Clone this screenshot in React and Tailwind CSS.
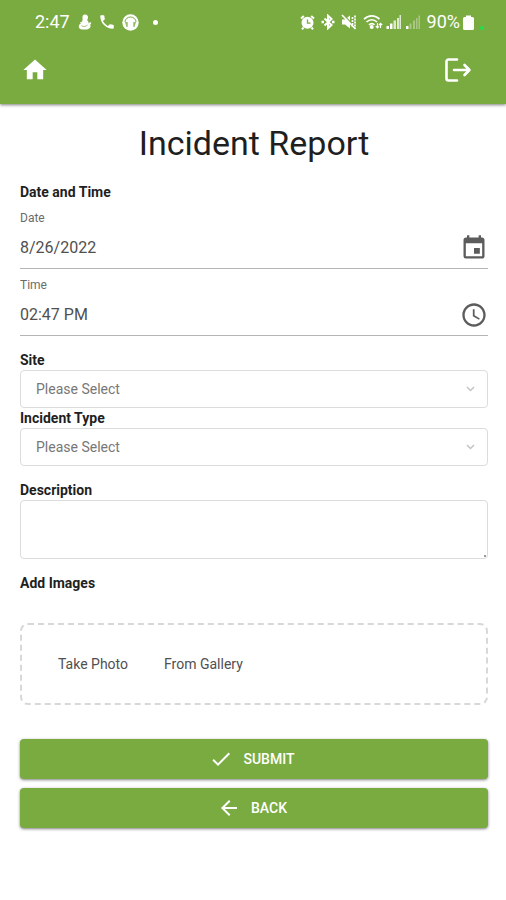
import React, { useState } from "react";
import { MdAccessTime, MdArrowBack, MdCheck, MdEvent, MdHome, MdPhone } from "react-icons/md";

const StatusBar = () => (
  <div className="flex h-9 items-center justify-between pt-2 pr-[22px] pl-[35px] text-lg leading-5">
    <div className="flex items-center gap-[6px]">
      <span className="mr-[2px]">2:47</span>
      <svg className="h-4 w-[14px]" viewBox="0 0 14 16" fill="currentColor">
        <path d="M7 0.5c2 0 3 1.3 3 3 0 1-.4 1.900-1 2.500 1.200.8 1.700 2 1.600 3.400l1.700-1.400 1 1-1 1.500c.9 2.600-.8 5-4.300 5H4.500C2 15.500.5 14 .8 12c.2-1.300 1-2 2-2.300L2 8.500l2.200-.9L4.600 5C4 2.500 5 .5 7 .5z" />
        <path d="M3.500 11.500c1.500 1.500 4 1.500 6-.5" fill="none" stroke="#7aab41" strokeWidth="1" opacity="0.7" />
      </svg>
      <MdPhone className="size-[18px]" />
      <svg className="size-[17px]" viewBox="0 0 17 17">
        <circle cx="8.500" cy="8.500" r="8.200" fill="currentColor" />
        <path d="M3 8a5.500 5 0 0 1 11 0" fill="none" stroke="#7aab41" strokeWidth="1" />
        <path d="M3 8h2.700v5H4.500zM11.300 8H14l-1.500 5h-1.200z" fill="#7aab41" opacity="0.8" />
      </svg>
      <span className="ml-2 size-[5px] rounded-full bg-white" />
    </div>
    <div className="flex items-center gap-[6px]">
      <svg className="size-[15px]" viewBox="0 0 15 15">
        <circle cx="7.500" cy="7.800" r="6" fill="currentColor" />
        <path d="M1 3.500L3.800 1M14 3.500L11.200 1M3.500 12.500L2 14.300M11.500 12.500l1.500 1.800" stroke="currentColor" strokeWidth="2" />
        <path d="M7.500 4.500v3.700h3" fill="none" stroke="#7aab41" strokeWidth="1.300" />
      </svg>
      <svg className="h-4 w-[14px]" viewBox="0 0 14 16" fill="none" stroke="currentColor" strokeWidth="2">
        <path d="M3.500 4.500l7 6.500L7 14.300V1.700L10.500 5l-7 6.500" />
        <path d="M0.500 8h2.500M11 8h2.500" strokeWidth="2.500" />
      </svg>
      <svg className="h-4 w-[16px]" viewBox="0 0 16 16">
        <path d="M1 5.500h3L9 1.500v13l-5-4H1z" fill="currentColor" />
        <path d="M2 0.500l13 13" stroke="#7aab41" strokeWidth="1.200" />
        <path d="M1 1l13.500 14" stroke="currentColor" strokeWidth="1.700" />
        <path d="M11.500 3v10M14 1.500v13" stroke="currentColor" strokeWidth="1.700" strokeDasharray="2 1" />
      </svg>
      <div className="flex items-center gap-[3px]">
        <svg className="h-4 w-5" viewBox="0 0 20 16" fill="none" stroke="currentColor" strokeWidth="1.700">
          <path d="M1 5.200c4.500-4.500 11-4.500 15.500 0M3.500 8c3-3 7.500-3 10.500 0M6 10.800c1.700-1.700 4-1.700 5.500 0" />
          <circle cx="8.700" cy="13" r="1.200" fill="currentColor" />
          <path d="M14.500 9v4.500M12.800 12l1.700 1.800 1.300-1.500M17.500 14V9.500M16 11l1.500-1.700L19.200 11" strokeWidth="1.200" />
        </svg>
        <svg className="h-4 w-4" viewBox="0 0 16 16" fill="currentColor">
          <path d="M0.500 12H3v3H0.500zM4 9.500h2.500V15H4z" />
          <path d="M7.500 6.500H10V15H7.500zM11 4h2v11h-2zM13.500 1H15v14h-1.500z" opacity="0.75" />
        </svg>
        <svg className="h-4 w-4" viewBox="0 0 16 16" fill="currentColor">
          <path d="M1 12h2.500v3H1z" />
          <path d="M4.500 9.500h2V15h-2zM8 6.500h2V15H8zM11 4h1.500v11H11zM13.500 1.500H15V15h-1.500z" opacity="0.35" />
        </svg>
      </div>
      <div className="flex items-center gap-[3px]">
        <span>90%</span>
        <svg className="h-[15px] w-[11px]" viewBox="0 0 11 15" fill="currentColor">
          <path d="M3 0.500h5V2h1.500a1.500 1.500 0 0 1 1.500 1.500v10a1.500 1.500 0 0 1-1.500 1.500h-8A1.500 1.500 0 0 1 0 13.500v-10A1.500 1.500 0 0 1 1.500 2H3z" />
        </svg>
        <span className="mb-[2px] ml-[3px] size-1 self-end rounded-full bg-[#1fe04b]" />
      </div>
    </div>
  </div>
);

const PickerField = ({ id, label, value, onChange, icon: Icon }) => (
  <div className="pt-[6px]">
    <label htmlFor={id} className="block text-xs leading-5 text-[#6b6b6b]">
      {label}
    </label>
    <div className="flex h-[41px] items-center border-b border-[#b5b5b5]">
      <input
        id={id}
        type="text"
        value={value}
        onChange={e => onChange(e.target.value)}
        className="min-w-0 flex-1 bg-transparent text-base text-[#505050] outline-none"
      />
      <button type="button" aria-label={`Choose ${label.toLowerCase()}`} className="text-[#5c5c5c]">
        <Icon className="size-7" />
      </button>
    </div>
  </div>
);

const SelectField = ({ id, label, options }) => (
  <div>
    <label htmlFor={id} className="block text-sm leading-5 font-bold">
      {label}
    </label>
    <div className="relative">
      <select
        id={id}
        className="block h-[38px] w-full appearance-none rounded border border-[#dcdcdc] bg-white px-[15px] text-sm text-[#777777]"
      >
        <option value="">Please Select</option>
        {options.map(o => (
          <option key={o}>{o}</option>
        ))}
      </select>
      <svg
        className="pointer-events-none absolute top-4 right-[13px] h-[6px] w-[9px] text-[#c4c4c4]"
        viewBox="0 0 9 6"
        fill="none"
        stroke="currentColor"
        strokeWidth="1.500"
      >
        <path d="M1 1l3.500 3.500L8 1" />
      </svg>
    </div>
  </div>
);

const ActionButton = ({ type = "button", icon: Icon, children }) => (
  <button
    type={type}
    className="flex h-10 w-full items-center justify-center gap-[10px] rounded bg-[#7aab41] pr-1 text-sm font-medium text-white shadow-[0_1px_3px_rgba(0,0,0,0.5)]"
  >
    <Icon className="size-6" />
    {children}
  </button>
);

const App = () => {
  const [date, setDate] = useState("8/26/2022");
  const [time, setTime] = useState("02:47 PM");

  return (
    <div className="min-h-screen bg-white font-[Roboto,sans-serif] text-[#1f1f1f]">
      <header className="bg-[#7aab41] text-white shadow-[0_1px_3px_rgba(0,0,0,0.5)]">
        <StatusBar />
        <nav className="flex h-[68px] items-center justify-between pr-[34px] pl-[21px]">
          <a href="#home" aria-label="Home">
            <MdHome className="size-7" />
          </a>
          <button type="button" aria-label="Log out">
            <svg
              className="h-6 w-7"
              viewBox="0 0 28 24"
              fill="none"
              stroke="currentColor"
              strokeWidth="2.600"
              strokeLinecap="round"
              strokeLinejoin="round"
            >
              <path d="M13 1.500H4.500a2 2 0 0 0-2 2v17a2 2 0 0 0 2 2H13" />
              <path d="M10 12h15.500M20.500 7l5 5-5 5" />
            </svg>
          </button>
        </nav>
      </header>

      <main className="pt-4 pr-[18px] pb-8 pl-5">
        <h1 className="text-center text-[34px] leading-[46px]">Incident Report</h1>

        <form onSubmit={e => e.preventDefault()}>
          <h2 className="mt-4 text-sm leading-5 font-bold">Date and Time</h2>
          <PickerField id="date" label="Date" value={date} onChange={setDate} icon={MdEvent} />
          <PickerField id="time" label="Time" value={time} onChange={setTime} icon={MdAccessTime} />

          <div className="mt-[14px]">
            <SelectField id="site" label="Site" options={["Main Office", "Warehouse"]} />
            <SelectField id="incident-type" label="Incident Type" options={["Injury", "Theft", "Damage"]} />
          </div>

          <div className="mt-[14px]">
            <label htmlFor="description" className="block text-sm leading-5 font-bold">
              Description
            </label>
            <div className="relative">
              <textarea
                id="description"
                className="block h-[59px] w-full resize-none rounded border border-[#dcdcdc] px-3 py-2 text-sm"
              />
              <span className="pointer-events-none absolute right-[2px] bottom-[2px] size-[2px] bg-[#999999]" />
            </div>
          </div>

          <h2 className="mt-[14px] text-sm leading-5 font-bold">Add Images</h2>
          <div className="mt-[30px] flex h-[82px] items-center gap-9 rounded-lg border-2 border-dashed border-[#d8d8d8] pl-9 text-sm text-[#505050]">
            <button type="button">Take Photo</button>
            <button type="button">From Gallery</button>
          </div>

          <div className="mt-[34px] flex flex-col gap-[9px]">
            <ActionButton type="submit" icon={MdCheck}>SUBMIT</ActionButton>
            <ActionButton icon={MdArrowBack}>BACK</ActionButton>
          </div>
        </form>
      </main>
    </div>
  );
};

export default App;
